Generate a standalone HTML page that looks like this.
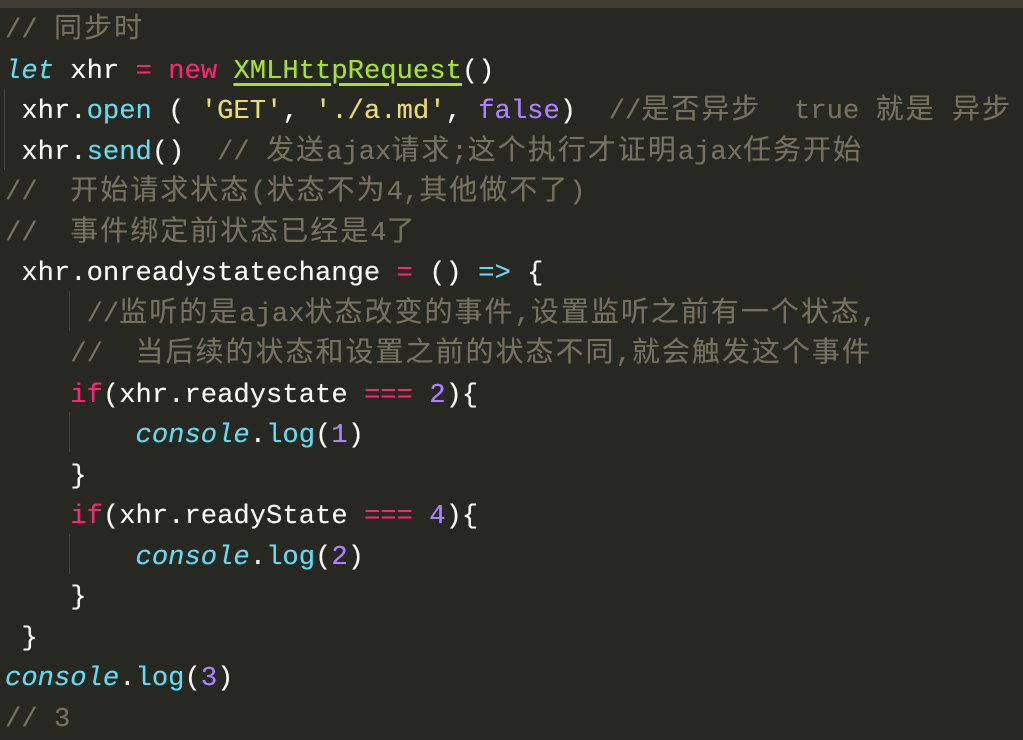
<!DOCTYPE html>
<html><head><meta charset="utf-8"><style>
html,body{margin:0;padding:0;background:#272822;width:1023px;height:728px;overflow:hidden}
.top{position:absolute;left:0;top:0;width:1023px;height:8px;background:#3e3d32}
pre{position:absolute;left:5px;top:11px;margin:0;font-family:"Liberation Mono","Noto Sans CJK SC",monospace;font-size:27.2px;line-height:40.5px;color:#f8f8f2;white-space:pre;text-shadow:0 0 0.4px currentColor}
.c{color:#75715e}.k{color:#f92672}.f{color:#66d9ef}.i{color:#66d9ef;font-style:italic}
.g{color:#a6e22e;text-decoration:underline;text-decoration-thickness:3px;text-underline-offset:5px}
.s{color:#e6db74}.n{color:#ae81ff}
.z{font-family:"Noto Sans CJK SC",sans-serif;font-size:28px;letter-spacing:2px;line-height:16px}
.gd{position:absolute;width:1px;background:#464741}
</style></head><body>
<div class="top"></div>
<div class="gd" style="left:4px;top:89px;height:81px"></div>
<div class="gd" style="left:69px;top:291px;height:40px"></div>
<div class="gd" style="left:69px;top:412px;height:40px"></div>
<div class="gd" style="left:69px;top:534px;height:40px"></div>
<pre><span class="c">// <span class="z">同步时</span></span>
<span class="i">let</span> xhr <span class="k">=</span> <span class="k">new</span> <span class="g">XMLHttpRequest</span>()
 xhr.<span class="f">open</span> ( <span class="s">'GET'</span>, <span class="s">'./a.md'</span>, <span class="n">false</span>)  <span class="c">//<span class="z">是否异步</span>  true <span class="z">就是</span> <span class="z">异步</span></span>
 xhr.<span class="f">send</span>()  <span class="c">// <span class="z">发送</span>ajax<span class="z">请求</span>;<span class="z">这个执行才证明</span>ajax<span class="z">任务开始</span></span>
<span class="c">//  <span class="z">开始请求状态</span>(<span class="z">状态不为</span>4,<span class="z">其他做不了</span>)</span>
<span class="c">//  <span class="z">事件绑定前状态已经是</span>4<span class="z">了</span></span>
 xhr.onreadystatechange <span class="k">=</span> () <span class="f">=&gt;</span> {
     <span class="c">//<span class="z">监听的是</span>ajax<span class="z">状态改变的事件</span>,<span class="z">设置监听之前有一个状态</span>,</span>
    <span class="c">//  <span class="z">当后续的状态和设置之前的状态不同</span>,<span class="z">就会触发这个事件</span></span>
    <span class="k">if</span>(xhr.readystate <span class="k">===</span> <span class="n">2</span>){
        <span class="i">console</span>.<span class="f">log</span>(<span class="n">1</span>)
    }
    <span class="k">if</span>(xhr.readyState <span class="k">===</span> <span class="n">4</span>){
        <span class="i">console</span>.<span class="f">log</span>(<span class="n">2</span>)
    }
 }
<span class="i">console</span>.<span class="f">log</span>(<span class="n">3</span>)
<span class="c">// 3</span></pre>
</body></html>
